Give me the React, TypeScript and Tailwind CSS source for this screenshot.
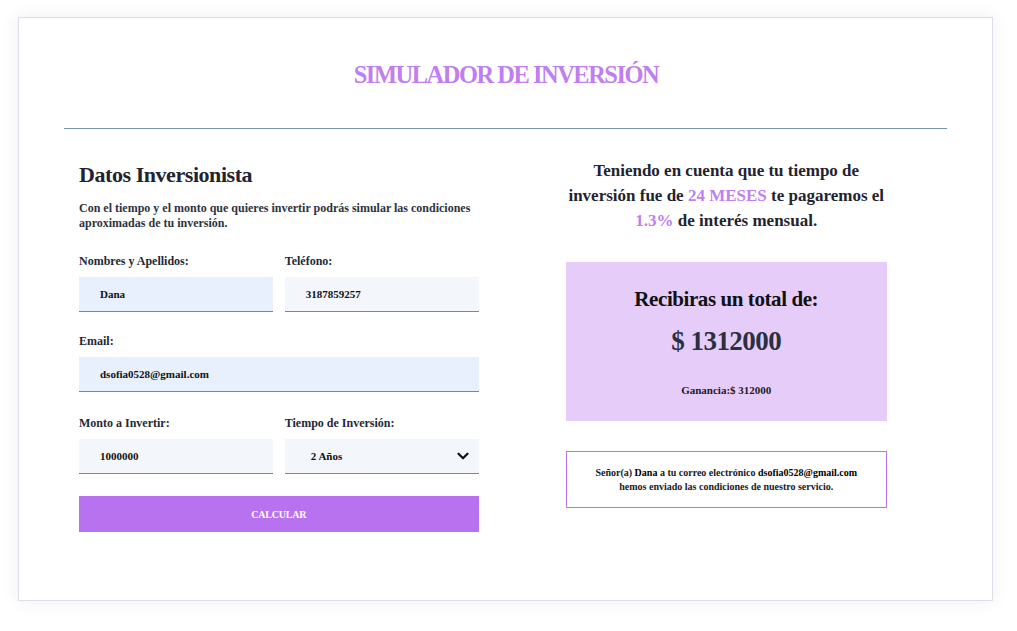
import { ChevronDown } from "lucide-react";

const serif = { fontFamily: '"Liberation Serif", "DejaVu Serif", serif' };

const Field = ({ label, value, bg, className }: { label: string; value: string; bg: string; className?: string }) => (
  <div className={className}>
    <label className="block text-[12px] font-bold text-[#1f2937] leading-[15px] mb-[8px]">{label}</label>
    <div className={`h-[35px] ${bg} border-b border-[#7b8799] flex items-center pl-[21px] text-[11px] font-bold text-[#111]`}>
      {value}
    </div>
  </div>
);

const App = () => {
  return (
    <div className="min-h-[631px] bg-white pt-[17px] pl-[18px]" style={serif}>
      <div className="w-[975px] h-[584px] bg-white border border-[#dedde8] shadow-[0_0_18px_rgba(0,0,0,0.07)] px-[45px]">
        <div className="h-[110px] flex items-center justify-center">
          <h1 className="text-[26px] font-bold text-[#c07ef0] tracking-[-0.06em] mt-[2px] scale-x-[0.94]">SIMULADOR DE INVERSIÓN</h1>
        </div>
        <div className="h-px bg-[#7b93b3]"></div>

        <div className="grid grid-cols-2">
          {/* Formulario */}
          <div className="pl-[15px] pr-[27px] pt-[31px]">
            <h2 className="text-[22px] font-bold text-[#1f2430] leading-[30px] tracking-[-0.02em]">Datos Inversionista</h2>
            <p className="text-[12px] font-bold text-[#2d3340] leading-[15px] mt-[11px]">
              Con el tiempo y el monto que quieres invertir podrás simular las condiciones aproximadas de tu inversión.
            </p>

            <div className="grid grid-cols-2 gap-x-[12px] mt-[23px]">
              <Field label="Nombres y Apellidos:" value="Dana" bg="bg-[#e8f0fe]" />
              <Field label="Teléfono:" value="3187859257" bg="bg-[#f3f6fa]" />
            </div>

            <Field className="mt-[22px]" label="Email:" value="dsofia0528@gmail.com" bg="bg-[#e8f0fe]" />

            <div className="grid grid-cols-2 gap-x-[12px] mt-[24px]">
              <Field label="Monto a Invertir:" value="1000000" bg="bg-[#f3f6fa]" />
              <div>
                <label className="block text-[12px] font-bold text-[#1f2937] leading-[15px] mb-[8px]">Tiempo de Inversión:</label>
                <div className="h-[35px] bg-[#f3f6fa] border-b border-[#7b8799] flex items-center justify-between pl-[26px] pr-[7px] text-[11px] font-bold text-[#111]">
                  <span>2 Años</span>
                  <ChevronDown size={18} strokeWidth={3} className="text-[#111]" />
                </div>
              </div>
            </div>

            <button className="mt-[22px] w-full h-[36px] bg-[#b972ef] text-white text-[10px] font-bold tracking-[-0.02em]">
              CALCULAR
            </button>
          </div>

          {/* Resultado */}
          <div className="flex flex-col items-center pt-[29px]">
            <div className="text-[17px] font-bold text-[#1f2430] leading-[25px] text-center">
              <div>Teniendo en cuenta que tu tiempo de</div>
              <div>
                inversión fue de <span className="text-[#c07ef0]">24 MESES</span> te pagaremos el
              </div>
              <div>
                <span className="text-[#c07ef0]">1.3%</span> de interés mensual.
              </div>
            </div>

            <div className="mt-[29px] w-[321px] h-[159px] bg-[#e6cdf9] flex flex-col items-center pt-[23px]">
              <h3 className="text-[21px] font-bold text-[#111] leading-[28px] tracking-[-0.02em]">Recibiras un total de:</h3>
              <div className="text-[27px] font-bold text-[#2a3040] leading-[36px] mt-[10px] tracking-[-0.02em]">$ 1312000</div>
              <div className="text-[11px] font-bold text-[#1a1a2a] mt-[23px]">Ganancia:$ 312000</div>
            </div>

            <div className="mt-[30px] w-[321px] h-[57px] border border-[#b972ef] flex flex-col items-center justify-center text-[10px] font-bold text-[#1a1a2a] leading-[14px] text-center">
              <p>
                Señor(a) <span className="text-black">Dana</span> a tu correo electrónico <span className="text-black">dsofia0528@gmail.com</span>
              </p>
              <p>hemos enviado las condiciones de nuestro servicio.</p>
            </div>
          </div>
        </div>
      </div>
    </div>
  );
};

export default App;
